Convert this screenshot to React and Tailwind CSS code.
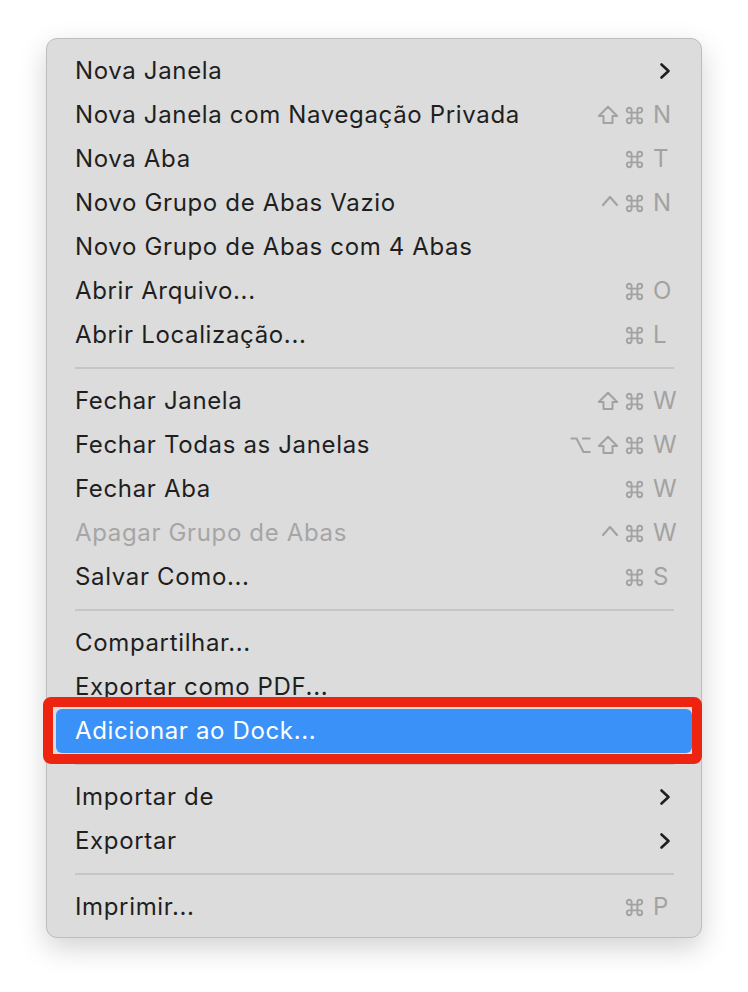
import React from "react";

const gray = "#a2a2a2";

const Shift = () => (
  <svg width="22" height="20" viewBox="0 0 22 20" fill="none" stroke={gray} strokeWidth="2" strokeLinejoin="round">
    <path d="M11 1.8 L20.2 11 H15.5 V18 H6.5 V11 H1.8 Z" />
  </svg>
);

const Cmd = () => (
  <svg width="19" height="19" viewBox="0 0 19 19" fill="none" stroke={gray} strokeWidth="1.9">
    <path d="M6.6 4.2 V14.8 A2.4 2.4 0 1 1 4.2 12.4 H14.8 A2.4 2.4 0 1 1 12.4 14.8 V4.2 A2.4 2.4 0 1 1 14.8 6.6 H4.2 A2.4 2.4 0 1 1 6.6 4.2 Z" />
  </svg>
);

const Ctrl = () => (
  <svg width="18" height="20" viewBox="0 0 18 20" fill="none" stroke={gray} strokeWidth="2.2" strokeLinecap="round" strokeLinejoin="round">
    <path d="M2 12 L9 4 L16 12" />
  </svg>
);

const Opt = () => (
  <svg width="21" height="20" viewBox="0 0 21 20" fill="none" stroke={gray} strokeWidth="2.1">
    <path d="M0.5 3.5 H6.5 L13.5 17 H20.5 M12 3.5 H20.5" />
  </svg>
);

const Chevron = () => (
  <svg width="12" height="18" viewBox="0 0 12 18" fill="none" stroke="#1f1f1f" strokeWidth="2.6" strokeLinecap="round" strokeLinejoin="round">
    <path d="M2.5 2.5 L9.5 9 L2.5 15.5" />
  </svg>
);

const mods = { shift: Shift, cmd: Cmd, ctrl: Ctrl, opt: Opt };

const groups = [
  [
    { label: "Nova Janela", sub: true },
    { label: "Nova Janela com Navegação Privada", keys: ["shift", "cmd"], key: "N" },
    { label: "Nova Aba", keys: ["cmd"], key: "T" },
    { label: "Novo Grupo de Abas Vazio", keys: ["ctrl", "cmd"], key: "N" },
    { label: "Novo Grupo de Abas com 4 Abas" },
    { label: "Abrir Arquivo...", keys: ["cmd"], key: "O" },
    { label: "Abrir Localização...", keys: ["cmd"], key: "L" },
  ],
  [
    { label: "Fechar Janela", keys: ["shift", "cmd"], key: "W" },
    { label: "Fechar Todas as Janelas", keys: ["opt", "shift", "cmd"], key: "W" },
    { label: "Fechar Aba", keys: ["cmd"], key: "W" },
    { label: "Apagar Grupo de Abas", keys: ["ctrl", "cmd"], key: "W", disabled: true },
    { label: "Salvar Como...", keys: ["cmd"], key: "S" },
  ],
  [
    { label: "Compartilhar..." },
    { label: "Exportar como PDF..." },
    { label: "Adicionar ao Dock...", active: true },
  ],
  [
    { label: "Importar de", sub: true },
    { label: "Exportar", sub: true },
  ],
  [{ label: "Imprimir...", keys: ["cmd"], key: "P" }],
];

const Row = ({ item }) => {
  const textColor = item.active ? "text-white" : item.disabled ? "text-[#a6a6a6]" : "text-[#1f1f1f]";
  return (
    <div className="relative">
      <div
        className={`h-[44px] flex items-center pl-[19px] pr-[14px] rounded-[6px] ${
          item.active ? "bg-[#3a92f8]" : ""
        }`}
      >
        <span className={`flex-1 text-[24px] leading-none tracking-[0.65px] ${textColor}`}>{item.label}</span>
        {item.sub && (
          <span className="mr-[7px] flex items-center">
            <Chevron />
          </span>
        )}
        {item.keys && (
          <span className="flex items-center">
            <span className="flex items-center gap-[6px]">
              {item.keys.map((k, i) => {
                const M = mods[k];
                return <M key={i} />;
              })}
            </span>
            <span className="ml-[9px] w-[25px] text-[24px] leading-none text-[#a2a2a2]">{item.key}</span>
          </span>
        )}
      </div>
      {item.active && (
        <div className="absolute -left-[13px] -right-[10px] -top-[12px] -bottom-[11px] border-[10px] border-[#ec2410] rounded-[8px] z-10" />
      )}
    </div>
  );
};

export default function App() {
  return (
    <div
      className="w-[748px] h-[992px] bg-white pt-[38px] pl-[46px]"
      style={{ fontFamily: "Inter, 'DejaVu Sans', sans-serif" }}
    >
      <div className="w-[656px] h-[900px] bg-[#dcdcdc] border border-[#bdbdbd] rounded-[11px] shadow-[0_10px_28px_rgba(0,0,0,0.18)] px-[9px] pt-[10px]">
        {groups.map((g, gi) => (
          <div key={gi}>
            {gi > 0 && (
              <div className="h-[22px] flex items-center pl-[19px] pr-[18px]">
                <div className="h-[2px] w-full bg-[#c6c6c6]" />
              </div>
            )}
            {g.map((item, i) => (
              <Row key={i} item={item} />
            ))}
          </div>
        ))}
      </div>
    </div>
  );
}
